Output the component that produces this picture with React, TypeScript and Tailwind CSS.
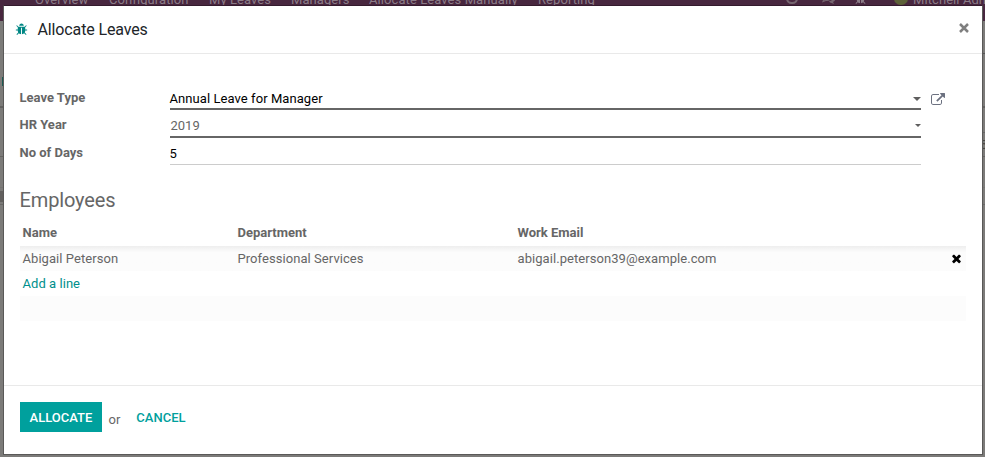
import React from "react";

const BUG =
  "M1696 960q0 26-19 45t-45 19h-224q0 171-67 290l208 209q19 19 19 45t-19 45q-18 19-45 19t-45-19l-198-197q-5 5-15 13t-42 28.5-65 36.5-82 29-97 13v-896h-128v896q-51 0-101.5-13.5t-87-33-66-39-43.5-32.5l-15-14-183 207q-20 21-48 21-24 0-43-16-19-18-20.5-44.5t15.5-46.5l202-227q-58-114-58-274h-224q-26 0-45-19t-19-45 19-45 45-19h224v-294l-173-173q-19-19-19-45t19-45 45-19 45 19l173 173h844l173-173q19-19 45-19t45 19 19 45-19 45l-173 173v294h224q26 0 45 19t19 45zm-480-576h-640q0-133 93.5-226.5t226.5-93.5 226.5 93.5 93.5 226.5z";
const EXTERNAL =
  "M1408 928v320q0 119-84.5 203.5t-203.5 84.5h-832q-119 0-203.5-84.5t-84.5-203.5v-832q0-119 84.5-203.5t203.5-84.5h704q14 0 23 9t9 23v64q0 14-9 23t-23 9h-704q-66 0-113 47t-47 113v832q0 66 47 113t113 47h832q66 0 113-47t47-113v-320q0-14 9-23t23-9h64q14 0 23 9t9 23zm384-864v512q0 26-19 45t-45 19-45-19l-176-176-652 652q-10 10-23 10t-23-10l-114-114q-10-10-10-23t10-23l652-652-176-176q-19-19-19-45t19-45 45-19h512q26 0 45 19t19 45z";
const TIMES =
  "M1490 1322q0 40-28 68l-136 136q-28 28-68 28t-68-28l-294-294-294 294q-28 28-68 28t-68-28l-136-136q-28-28-28-68t28-68l294-294-294-294q-28-28-28-68t28-68l136-136q28-28 68-28t68 28l294 294 294-294q28-28 68-28t68 28l136 136q28 28 28 68t-28 68l-294 294 294 294q28 28 28 68z";

function Glyph({ d, className }: { d: string; className: string }) {
  return (
    <svg viewBox="0 0 1792 1792" fill="currentColor" className={`block shrink-0 ${className}`}>
      <path d={d} />
    </svg>
  );
}

function Caret({ className }: { className: string }) {
  return (
    <svg viewBox="0 0 8 4" fill="#5f5e5e" className={`block shrink-0 ${className}`}>
      <path d="M0 0H8L4 4Z" />
    </svg>
  );
}

function Backdrop() {
  return (
    <div className="h-full bg-[#7c7b79]">
      <nav className="flex h-[21px] items-start bg-[#48273f] text-[13px] leading-[15px] tracking-[0.08px] text-[#8b7c87]">
        <div className="-mt-[8px] flex w-[1010px] shrink-0 whitespace-nowrap *:shrink-0">
          <span className="ml-[35px] w-[74px]">Overview</span>
          <span className="w-[100px]">Configuration</span>
          <span className="w-[82px]">My Leaves</span>
          <span className="w-[78px]">Managers</span>
          <span className="w-[169px]">Allocate Leaves Manually</span>
          <span className="w-[248px]">Reporting</span>
          <span className="mt-px h-[11px] w-[12px] rounded-full border-2 border-[#75656f]" />
          <svg viewBox="0 0 14 12" className="ml-[23px] h-[12px] w-[14px]" fill="#75656f">
            <ellipse cx="5.5" cy="5" rx="5.5" ry="4" />
            <path d="M2 8L1 10.5L5 9ZM8 9Q12 9 12.5 5Q16 8 12 10L13 12L9 10.5Z" />
          </svg>
          <Glyph d={BUG} className="ml-[19px] h-[13px] w-[13px] text-[#8b7c87]" />
          <span className="ml-[27px] h-[13px] w-[14px] rounded-full bg-[#5d6139]" />
          <span className="ml-[5px]">Mitchell Admin</span>
        </div>
      </nav>
      <div className="flex h-[87px] border-b-2 border-[#626160]">
        <div className="ml-[2px] mt-[56px] h-[9px] w-[2px] bg-[#1c5b54]" />
        <div className="ml-auto mt-[32px] h-px w-[4px] bg-[#555]" />
      </div>
      <div className="flex h-[49px] justify-end border-b border-[#656462]">
        <div className="mt-[24px] h-[20px] w-[5px] border-t border-[#666] text-[13px] leading-[24px] text-[#494744]">5</div>
      </div>
      <div className="h-[31px] border-b border-[#757472]" />
      <div className="mt-[3px] h-[11px] w-[5px] bg-[#62605e]" />
      <div className="h-[3px] border-b border-[#696866]" />
    </div>
  );
}

function Field({ label, children }: { label: string; children: React.ReactNode }) {
  return (
    <div className="flex">
      <div className="w-[150px] shrink-0 font-bold text-[#666]">
        <span className="-ml-[0.5px]">{label}</span>
      </div>
      {children}
    </div>
  );
}

export default function App() {
  return (
    <div className="relative h-[457px] w-[985px] overflow-hidden font-[Roboto,sans-serif] text-[13px] leading-[20px] text-[#666]">
      <Backdrop />
      <section className="absolute left-[3px] top-[5px] flex h-[450px] w-[980px] flex-col border border-[#5a5958] border-t-[#341a2d] bg-white">
        <header className="flex h-[48px] shrink-0 items-center border-b border-[#e9e9e9] pl-[11px] pr-[13px]">
          <Glyph d={BUG} className="-mt-px h-[13px] w-[13px] text-[#008784]" />
          <h1 className="ml-[9.5px] flex-1 text-[16px] tracking-[-0.13px] text-[#212529]">Allocate Leaves</h1>
          <svg viewBox="0 0 10 10" className="-mt-[3px] h-[10px] w-[10px]" fill="none" stroke="#7f7f7f" strokeWidth="2.5">
            <path d="M1 1L9 9M9 1L1 9" />
          </svg>
        </header>

        <main className="flex-1 px-[16px] pt-[34px]">
          <Field label="Leave Type">
            <div className="flex h-[22px] w-[751px] items-center border-b-2 border-[#666] text-black">
              <span className="-ml-[0.5px] flex-1 pt-[2px] tracking-[0.07px]">Annual Leave for Manager</span>
              <Caret className="mt-px h-[4px] w-[8px]" />
            </div>
            <Glyph d={EXTERNAL} className="ml-[10px] mt-[5px] h-[14px] w-[14px] text-[#6c7180]" />
          </Field>
          <div className="h-[5px]" />
          <Field label="HR Year">
            <div className="flex h-[23px] w-[751px] items-center border-b-2 border-[#666]">
              <span className="flex-1 pl-[0.5px]">2019</span>
              <Caret className="mb-px h-[3px] w-[6px]" />
            </div>
          </Field>
          <div className="h-[5px]" />
          <Field label="No of Days">
            <div className="h-[22px] w-[751px] border-b border-[#ccc] pt-[2px] leading-[18px] text-black">
              <span className="-ml-[0.5px]">5</span>
            </div>
          </Field>

          <h2 className="-ml-[0.5px] mt-[22px] text-[20px] leading-[26px] tracking-[-0.14px]">Employees</h2>
          <div className="mt-[7px] w-[946px]">
            <div className="grid h-[26px] grid-cols-[215px_280px_1fr] items-center pl-[2.5px] font-bold">
              <span>Name</span>
              <span>Department</span>
              <span>Work Email</span>
            </div>
            <div className="grid h-[25px] grid-cols-[215px_280px_1fr_16px] items-center bg-linear-to-b from-[#eeeeee] to-[#fcfcfc] to-25% pl-[2.5px] tracking-[0.06px]">
              <span>Abigail Peterson</span>
              <span>Professional Services</span>
              <span>abigail.peterson39@example.com</span>
              <Glyph d={TIMES} className="h-[13px] w-[13px] text-black" />
            </div>
            <div className="flex h-[25px] items-center pl-[2.5px] tracking-[0.05px] text-[#008f8c]">Add a line</div>
            <div className="h-[25px] bg-[#fcfcfc]" />
          </div>
        </main>

        <footer className="flex h-[69px] shrink-0 items-start border-t border-[#e9e9e9] px-[16px] pt-[16px]">
          <button className="h-[30px] w-[82px] bg-[#00a09d] pt-[2px] font-medium text-white">ALLOCATE</button>
          <span className="ml-[6.5px] pt-[8px]">or</span>
          <button className="ml-[16px] h-[30px] pt-[2px] font-medium text-[#00a09d]">CANCEL</button>
        </footer>
      </section>
    </div>
  );
}
